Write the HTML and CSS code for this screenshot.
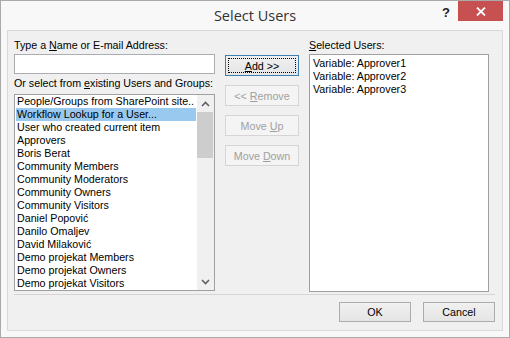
FILE: index.html
```html
<!DOCTYPE html>
<html>
<head>
<meta charset="utf-8">
<title>Select Users</title>
<link rel="stylesheet" href="styles.css">
</head>
<body>
<div class="window">
  <div class="titlebar">
    <div class="tb-left"></div>
    <div class="title">Select Users</div>
    <div class="tb-right">
      <span class="help">?</span>
      <span class="close">
        <svg width="10" height="9" viewBox="0 0 10 9"><path d="M1 0.5 L9 8.5 M9 0.5 L1 8.5" stroke="#fff" stroke-width="1.8" fill="none"/></svg>
      </span>
    </div>
  </div>
  <div class="client">
    <div class="main">
      <div class="col-left">
        <div class="label">Type a <u>N</u>ame or E-mail Address:</div>
        <div class="input"></div>
        <div class="label label2">Or select from <u>e</u>xisting Users and Groups:</div>
        <div class="listbox">
          <ul class="items">
            <li>People/Groups from SharePoint site..</li>
            <li class="sel">Workflow Lookup for a User...</li>
            <li>User who created current item</li>
            <li>Approvers</li>
            <li>Boris Berat</li>
            <li>Community Members</li>
            <li>Community Moderators</li>
            <li>Community Owners</li>
            <li>Community Visitors</li>
            <li>Daniel Popović</li>
            <li>Danilo Omaljev</li>
            <li>David Milaković</li>
            <li>Demo projekat Members</li>
            <li>Demo projekat Owners</li>
            <li>Demo projekat Visitors</li>
          </ul>
          <div class="scrollbar">
            <div class="arrow">
              <svg width="9" height="6" viewBox="0 0 9 6"><path d="M1 5 L4.5 1.5 L8 5" stroke="#606060" stroke-width="1.6" fill="none"/></svg>
            </div>
            <div class="track"><div class="thumb"></div></div>
            <div class="arrow">
              <svg width="9" height="6" viewBox="0 0 9 6"><path d="M1 1 L4.5 4.5 L8 1" stroke="#606060" stroke-width="1.6" fill="none"/></svg>
            </div>
          </div>
        </div>
      </div>
      <div class="col-mid">
        <div class="btn focused"><span class="focusrect"><span><u>A</u>dd &gt;&gt;</span></span></div>
        <div class="btn disabled"><span>&lt;&lt; <u>R</u>emove</span></div>
        <div class="btn disabled"><span>Move <u>U</u>p</span></div>
        <div class="btn disabled"><span>Move <u>D</u>own</span></div>
      </div>
      <div class="col-right">
        <div class="label"><u>S</u>elected Users:</div>
        <div class="selbox">
          <div class="selitem">Variable: Approver1</div>
          <div class="selitem">Variable: Approver2</div>
          <div class="selitem">Variable: Approver3</div>
        </div>
      </div>
    </div>
    <div class="separator"></div>
    <div class="footer">
      <div class="btn"><span>OK</span></div>
      <div class="btn"><span>Cancel</span></div>
    </div>
  </div>
</div>
</body>
</html>
```
FILE: styles.css
```css
* { box-sizing: border-box; }
html, body { margin: 0; padding: 0; background: #f7f7f7; }
.window {
  width: 510px;
  height: 338px;
  border: 1px solid #aaaaaa;
  background: #f8f8f8;
  font-family: "Liberation Sans", Arial, sans-serif;
  font-size: 10.7px;
  color: #000;
}
.titlebar {
  height: 29px;
  display: grid;
  grid-template-columns: 1fr auto 1fr;
}
.title {
  font-family: "Open Sans", "Noto Sans", sans-serif;
  font-size: 14.5px;
  color: #333;
  line-height: 29px;
}
.tb-right {
  display: flex;
  justify-content: flex-end;
  align-items: flex-start;
}
.help {
  font-family: "Liberation Sans", Arial, sans-serif;
  font-weight: bold;
  font-size: 13px;
  line-height: 13px;
  color: #222;
  margin-top: 5px;
  margin-right: 8px;
}
.close {
  width: 45px;
  height: 20px;
  background: #c75050;
  margin-right: 6px;
  display: flex;
  align-items: center;
  justify-content: center;
}
.client {
  margin: 0 6px;
  height: 301px;
  border: 1px solid #d9d9d9;
  background: #f0f0f0;
  padding: 8px 7px 8px 6px;
}
.main {
  display: flex;
  height: 252px;
}
.col-left { width: 201px; }
.label {
  line-height: 13px;
  height: 13px;
  white-space: nowrap;
}
.input {
  margin-top: 2px;
  height: 20px;
  border: 1px solid #abadb3;
  background: #fff;
}
.label2 { margin-top: 3px; }
.listbox {
  margin-top: 4px;
  height: 197px;
  border: 1px solid #a0a0a0;
  background: #fff;
  display: flex;
  overflow: hidden;
}
.items {
  list-style: none;
  margin: 0;
  padding: 0;
  flex: 1;
  min-width: 0;
  overflow: hidden;
}
.items li {
  height: 13px;
  line-height: 13px;
  margin: 0 1px;
  padding-left: 1px;
  white-space: nowrap;
}
.items li.sel { background: #99c9ef; }
.scrollbar {
  width: 17px;
  flex: none;
  background: #f0f0f0;
  display: flex;
  flex-direction: column;
}
.arrow {
  height: 17px;
  display: flex;
  align-items: center;
  justify-content: center;
}
.track { flex: 1; padding: 0 1px 0 0; }
.thumb {
  height: 46px;
  background: #cdcdcd;
}
.col-mid {
  width: 74px;
  margin-left: 10px;
  padding-top: 16px;
  display: flex;
  flex-direction: column;
  gap: 9px;
}
.btn {
  height: 21px;
  border: 1px solid #acacac;
  background: linear-gradient(#f0f0f0, #e5e5e5);
  display: flex;
  align-items: center;
  justify-content: center;
  white-space: nowrap;
}
.btn.focused {
  border-color: #3c7fb1;
  padding: 2px;
}
.focusrect {
  flex: 1;
  align-self: stretch;
  border: 1px dotted #000;
  display: flex;
  align-items: center;
  justify-content: center;
}
.btn.disabled {
  border-color: #d5d5d5;
  background: #f4f4f4;
  color: #a0a0a0;
}
.col-right {
  width: 180px;
  margin-left: 10px;
}
.selbox {
  margin-top: 2px;
  height: 238px;
  border: 1px solid #a0a0a0;
  background: #fff;
  padding: 2px 0 0 3px;
}
.selitem {
  line-height: 13px;
  height: 13px;
  white-space: nowrap;
}
.separator {
  margin-top: 3px;
  height: 1px;
  width: 481px;
  background: #d5d5d5;
}
.footer {
  margin-top: 7px;
  display: flex;
  justify-content: flex-end;
  gap: 12px;
}
.footer .btn {
  width: 72px;
  height: 20px;
}
```
